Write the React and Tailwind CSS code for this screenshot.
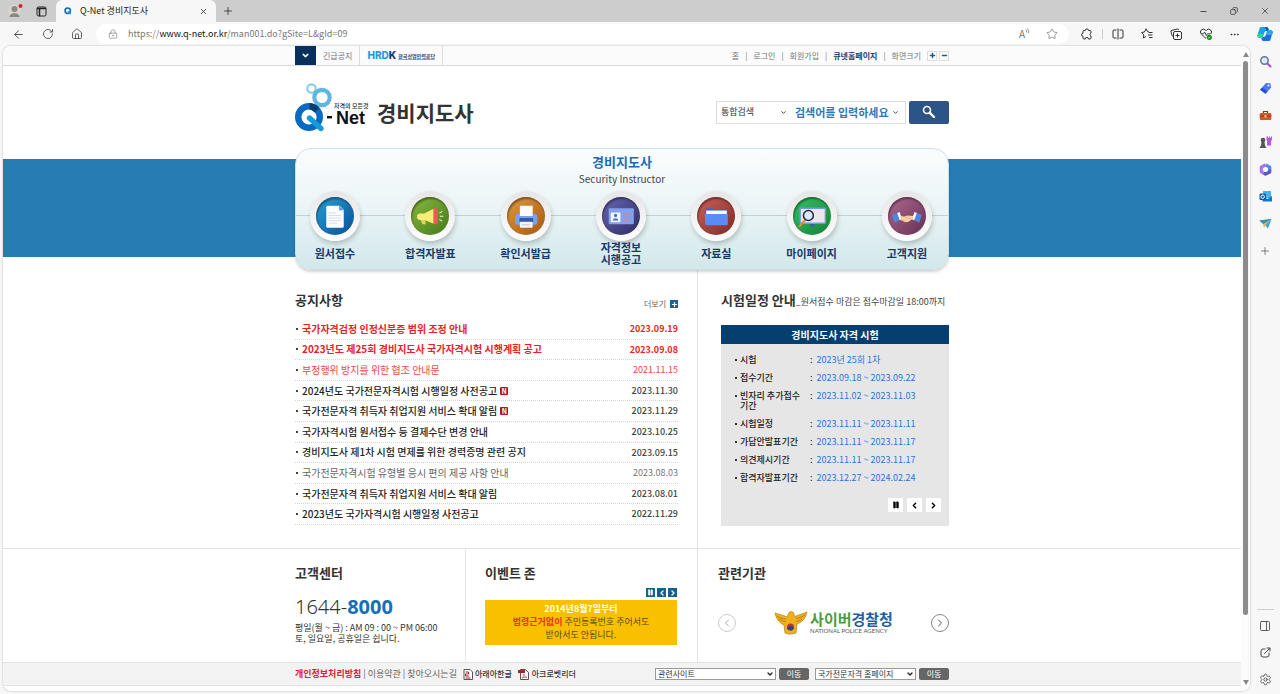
import {
  ArrowLeft,
  ChevronDown,
  ChevronLeft,
  ChevronRight,
  Copy,
  Ellipsis,
  House,
  LockKeyhole,
  Minus,
  PanelRight,
  Pause,
  Plus,
  RotateCw,
  Settings,
  Star,
  X,
} from 'lucide-react'

const NOTICES = [
  { title: '국가자격검정 인정신분증 범위 조정 안내', date: '2023.09.19', tone: 'hot' },
  { title: '2023년도 제25회 경비지도사 국가자격시험 시행계획 공고', date: '2023.09.08', tone: 'hot' },
  { title: '부정행위 방지를 위한 협조 안내문', date: '2021.11.15', tone: 'hotLight' },
  { title: '2024년도 국가전문자격시험 시행일정 사전공고', date: '2023.11.30', tone: 'bold', isNew: true },
  { title: '국가전문자격 취득자 취업지원 서비스 확대 알림', date: '2023.11.29', tone: 'bold', isNew: true },
  { title: '국가자격시험 원서접수 등 결제수단 변경 안내', date: '2023.10.25', tone: 'bold' },
  { title: '경비지도사 제1차 시험 면제를 위한 경력증명 관련 공지', date: '2023.09.15', tone: 'bold' },
  { title: '국가전문자격시험 유형별 응시 편의 제공 사항 안내', date: '2023.08.03', tone: 'light' },
  { title: '국가전문자격 취득자 취업지원 서비스 확대 알림', date: '2023.08.01', tone: 'bold' },
  { title: '2023년도 국가자격시험 시행일정 사전공고', date: '2022.11.29', tone: 'bold' },
]

const NOTICE_TONES = {
  hot: 'font-bold text-[#ee1c25]',
  hotLight: 'text-[#f0474c]',
  bold: 'font-medium text-[#222]',
  light: 'text-[#666]',
}

const DATE_TONES = {
  hot: 'font-bold text-[#ee1c25]',
  hotLight: 'text-[#f0474c]',
  bold: 'font-medium text-[#444]',
  light: 'text-[#777]',
}

const SCHEDULE = [
  ['시험', '2023년 25회 1차'],
  ['접수기간', '2023.09.18 ~ 2023.09.22'],
  ['빈자리 추가접수기간', '2023.11.02 ~ 2023.11.03'],
  ['시험일정', '2023.11.11 ~ 2023.11.11'],
  ['가답안발표기간', '2023.11.11 ~ 2023.11.17'],
  ['의견제시기간', '2023.11.11 ~ 2023.11.17'],
  ['합격자발표기간', '2023.12.27 ~ 2024.02.24'],
]

const MENUS = [
  {
    label: '원서접수',
    disc: 'from-[#2ba3d8] to-[#0b4d97]',
    icon: (
      <>
        <path d="M10 10a1.500 1.500 0 0 1 1.500-1.500H23l4 4V28.500a1.500 1.500 0 0 1-1.500 1.500h-14A1.500 1.500 0 0 1 10 28.500z" fill="#fafcfe" />
        <path d="M22.500 8.500l4.500 4.500h-4.500z" fill="#5f8fe8" />
        <path d="M12.500 15.500h7M12.500 18h12M12.500 20.500h12M12.500 23h12M12.500 25.500h8" stroke="#d3d6da" strokeWidth=".8" />
      </>
    ),
  },
  {
    label: '합격자발표',
    disc: 'from-[#8ab93f] to-[#447a1b]',
    icon: (
      <>
        <path d="M9 21.500h4.500l1 5h-3.500z" fill="#e5d250" />
        <path d="M6 17.500l2-1.500h5l9-4.500v14.500l-9-3.500H8l-2-1.500z" fill="#f6ec77" />
        <rect x="22" y="11" width="4" height="15.500" rx=".8" fill="#ee5a5a" />
        <path d="M28 15.500l2-1.300M28.500 18.700h2.500M28 22l2 1.300" stroke="#fff6c8" strokeWidth="1" strokeLinecap="round" />
      </>
    ),
  },
  {
    label: '확인서발급',
    disc: 'from-[#e09a3c] to-[#a8590f]',
    icon: (
      <>
        <rect x="8" y="16.500" width="21.500" height="10.500" rx="2" fill="#79a1ee" />
        <rect x="12.500" y="8.500" width="12.500" height="10" fill="#fbfbfb" />
        <rect x="12" y="20.500" width="13.500" height="4" rx="1" fill="#3459a8" />
        <rect x="12.500" y="24" width="12.500" height="6" rx="1" fill="#f2f4f8" />
        <path d="M14.500 27h8" stroke="#b9c3d6" strokeWidth=".8" />
      </>
    ),
  },
  {
    label: '자격정보 시행공고',
    disc: 'from-[#6a66b4] to-[#2f2f62]',
    icon: (
      <>
        <rect x="6.500" y="11" width="24.500" height="15.500" rx="1" fill="#82a0ec" />
        <rect x="8.500" y="15" width="9.500" height="9.500" rx=".6" fill="#eef3fd" />
        <circle cx="13.200" cy="18" r="1.600" fill="#4a73c8" />
        <path d="M10.500 23c0-3 5.400-3 5.400 0z" fill="#4a73c8" />
        <path d="M20.500 17h3.500m1.500 0h3M20.500 19.800h7M20.500 22.500h5" stroke="#c489a6" strokeWidth="1.200" />
      </>
    ),
  },
  {
    label: '자료실',
    disc: 'from-[#cb625a] to-[#7f2a26]',
    icon: (
      <>
        <path d="M8.500 12.500a1.500 1.500 0 0 1 1.500-1.500h5l1.500 1.500h12a1.500 1.500 0 0 1 1.500 1.500V18H8.500z" fill="#3b66cf" />
        <rect x="9" y="13.200" width="20" height="5" fill="#fdfdfd" />
        <path d="M7.500 16.500h22.500v9.500a1.500 1.500 0 0 1-1.500 1.500H9.500a1.500 1.500 0 0 1-1.500-1.500z" fill="#5b8cf5" />
      </>
    ),
  },
  {
    label: '마이페이지',
    disc: 'from-[#35c463] to-[#15803a]',
    icon: (
      <>
        <rect x="7" y="11" width="24.500" height="14.500" rx=".8" fill="#ece6ea" stroke="#6f9ce8" strokeWidth="1.400" />
        <path d="M16 26.200h6l-3 4z" fill="#35659f" />
        <path d="M11.500 22.500l-5 6" stroke="#e08b35" strokeWidth="2.200" strokeLinecap="round" />
        <circle cx="15" cy="18" r="4.800" fill="#dcebfa" stroke="#1d2f4d" strokeWidth="1.500" />
      </>
    ),
  },
  {
    label: '고객지원',
    disc: 'from-[#b16a95] to-[#66304f]',
    icon: (
      <>
        <path d="M4 17.500l6-2.500 2.500 7-6 3z" fill="#4c86dd" />
        <path d="M33 17.500l-6-2.500-2.500 7 6 3z" fill="#4c86dd" />
        <path d="M9 15.500l2.200-.8 2.500 7-2.200 1z" fill="#fff" />
        <path d="M28 15.500l-2.200-.8-2.500 7 2.200 1z" fill="#fff" />
        <path d="M12 18.500l4 .5 3-1 5.500.5-.8 3-3.700 2.700-3.500.3-4-2z" fill="#f6cfa5" />
        <path d="M17 20l3 .3 3.500 2M17 24l-3.500-2" stroke="#dba577" strokeWidth=".7" fill="none" />
      </>
    ),
  },
]

function QMark({ className }) {
  return (
    <svg viewBox="0 0 30 30" className={className} aria-hidden="true">
      <circle cx="14" cy="14" r="10" fill="none" stroke="#0b6cc0" strokeWidth="6" />
      <path d="M15 16l10 10" stroke="#1c9ad6" strokeWidth="5" />
    </svg>
  )
}

function QnetLogo() {
  return (
    <svg width="76" height="60" viewBox="0 0 76 60" role="img" aria-label="Q-Net">
      <circle cx="16.500" cy="6.500" r="4.200" fill="none" stroke="#8ccdea" strokeWidth="2.200" />
      <circle cx="27" cy="15.500" r="7.700" fill="none" stroke="#5fb7df" strokeWidth="4.200" />
      <circle cx="14" cy="35" r="10.800" fill="none" stroke="#0a6abf" strokeWidth="6.400" />
      <path d="M14.500 21a14 14 0 0 1 10 5.200l-5 4.200a7.600 7.600 0 0 0-5-3z" fill="#0a3d70" />
      <path d="M14.500 36l11.500 10.500" stroke="#189ad8" strokeWidth="5.400" strokeLinecap="round" />
      <rect x="32" y="34" width="5" height="2.400" fill="#111" />
      <text x="41" y="42" fontSize="18" fontWeight="700" fill="#111" fontFamily="Liberation Sans, sans-serif">Net</text>
      <text x="39" y="26" fontSize="6" fontWeight="500" fill="#222" fontFamily="Noto Sans CJK KR, sans-serif">자격의 모든것</text>
    </svg>
  )
}

function PoliceEmblem() {
  return (
    <svg width="34" height="24" viewBox="0 0 34 24" aria-hidden="true">
      <path d="M1 2c3 1 8 2 12 4l2-4.500 2.500-1 2 1 1 4C24 4 29 3 33 1c-1 5-4 10-10 12l-1 9-4.500 1h-3L11 22l-1-8C5 12 2 7 1 2z" fill="#eeb01c" stroke="#b87d10" strokeWidth=".7" />
      <path d="M3 5c3 2 6 3 9 3M5 8c3 2 5 2.500 7 2.500M31 4c-3 2-6 3-9 3.500M28 8c-2 1.500-4 2-6 2.500" stroke="#a66d0c" strokeWidth=".7" fill="none" />
      <circle cx="16.500" cy="16" r="3.400" fill="#c93232" />
      <path d="M13.100 16a3.400 3.400 0 0 0 6.800 0c-1.700-1.400-5-.2-6.800 0z" fill="#23468f" />
    </svg>
  )
}

function CopilotIcon() {
  return (
    <svg width="16" height="16" viewBox="0 0 16 16" aria-hidden="true">
      <path d="M4.500 1h5c1.200 0 1.700.8 2 2l.5 2H9.500C8 5 7.500 6 7 7.500L5.500 12H2.500C.8 12 0 10.500.5 9L2.500 2.500C2.800 1.500 3.500 1 4.500 1z" fill="#1aa3e0" />
      <path d="M9.500 1c1.200 0 1.700.8 2 2l.5 2H9.500L8 1z" fill="#1257b8" />
      <path d="M11.500 15h-5c-1.200 0-1.700-.8-2-2L4 11h2.500C8 11 8.500 10 9 8.500L10.500 4h3c1.700 0 2.500 1.500 2 3l-2 6.500c-.3 1-1 1.500-2 1.500z" fill="#1d6fe0" />
      <path d="M11 4h2.500c1.700 0 2.500 1.500 2 3L15 9H9z" fill="#2aa9e8" />
      <path d="M1 8h5.800L5.500 12h-3C.8 12 0 10.500.5 9z" fill="#34d0a5" />
    </svg>
  )
}

const SIDE_ICONS = [
  {
    name: '검색',
    art: (
      <>
        <path d="M8.500 8.500l3 3" stroke="#a94fe0" strokeWidth="2" strokeLinecap="round" />
        <circle cx="5.500" cy="5.500" r="3.700" fill="#dbeaf5" stroke="#66798a" strokeWidth="1.500" />
      </>
    ),
  },
  {
    name: '쇼핑',
    art: (
      <>
        <path d="M7 1l4.500.3.500 4.500-5.500 6-5.500-4z" fill="#4a7bf0" />
        <path d="M1 7.800l5.500 4 2-2.200-5-4z" fill="#2f4fd0" />
        <circle cx="9.500" cy="3.500" r="1" fill="#fff" />
      </>
    ),
  },
  {
    name: '도구',
    art: (
      <>
        <path d="M4.500 4V2.500h4V4" fill="none" stroke="#8d3216" strokeWidth="1.200" />
        <rect x=".8" y="4" width="11.500" height="7" rx="1" fill="#d4572a" />
        <path d="M.8 7h11.500" stroke="#8d3216" strokeWidth="1" />
        <rect x="5.500" y="6" width="2" height="2.500" fill="#f5d08a" />
      </>
    ),
  },
  {
    name: '게임',
    art: (
      <>
        <path d="M7.500.5H9v1.200h1V.5h1v1.200h1V.5h1v3.500l-1 1v4.500H8V5L7.500 4z" fill="#b956ea" />
        <circle cx="4" cy="4" r="2.300" fill="#555" />
        <path d="M2.500 5.500h3l.5 4L7.500 12h-7L2 9.500z" fill="#555" />
      </>
    ),
  },
  {
    name: 'Microsoft 365',
    art: (
      <>
        <path d="M6.500 1.800L10.700 4.200v3" fill="none" stroke="#4b8ef2" strokeWidth="3.200" strokeLinejoin="round" />
        <path d="M10.700 6.500v2.500L6.500 11.200 4.500 10" fill="none" stroke="#5b55c8" strokeWidth="3.200" strokeLinejoin="round" />
        <path d="M4.500 10L2.300 8.800V4.200l4.200-2.400" fill="none" stroke="#a474e8" strokeWidth="3.200" strokeLinejoin="round" />
      </>
    ),
  },
  {
    name: 'Outlook',
    art: (
      <>
        <rect x="4" y="1" width="8" height="7" fill="#42b4ee" />
        <path d="M3.500 6l5 3L13 6v5.500H3.500z" fill="#1674c9" />
        <rect x=".5" y="3.500" width="6.500" height="6.500" rx="1" fill="#0f5ead" />
        <circle cx="3.700" cy="6.700" r="1.700" fill="none" stroke="#fff" strokeWidth="1" />
      </>
    ),
  },
  {
    name: '보내기',
    art: (
      <>
        <path d="M.5 3.500L12.500 2 9 11.500 6 8z" fill="#37a7e2" />
        <path d="M12.500 2L4 7l1 4 1.500-3z" fill="#e8b84e" />
        <path d="M.5 3.500L12.500 2 4 7z" fill="#3c8fb6" />
      </>
    ),
  },
]

function BrowserTabs() {
  return (
    <div className="flex h-[22px] items-center bg-[#cdcdcd] text-[#222]">
      <div className="flex w-14 items-center gap-3 pl-2">
        <svg width="16" height="16" viewBox="0 0 16 16" aria-hidden="true">
          <circle cx="6.500" cy="8" r="6.500" fill="#d8d3cd" />
          <circle cx="6.500" cy="6" r="3" fill="#8c8781" />
          <path d="M1.500 14c0-5 10-5 10 0z" fill="#8c8781" />
          <circle cx="12.500" cy="3" r="2" fill="#d81f26" />
        </svg>
        <svg width="11" height="11" viewBox="0 0 11 11" fill="none" stroke="#222" aria-hidden="true">
          <rect x="1" y="1" width="9" height="9" rx="1.500" />
          <path d="M1 2.500h9M3.500 3v7" strokeWidth="1.500" />
        </svg>
      </div>
      <div className="flex h-full w-40 items-center gap-2 rounded-t-md bg-[#f7f7f7] px-2">
        <QMark className="size-2" />
        <span className="flex-1 text-[9px]">Q-Net 경비지도사</span>
        <button type="button" aria-label="탭 닫기"><X size={9} /></button>
      </div>
      <button type="button" aria-label="새 탭" className="ml-1 p-0.5"><Plus size={12} strokeWidth={1.500} /></button>
      <div className="ml-auto flex w-[81px] items-center justify-between pr-2.5">
        <button type="button" aria-label="최소화"><Minus size={9} /></button>
        <button type="button" aria-label="이전 크기로"><Copy size={8} className="-scale-x-100" /></button>
        <button type="button" aria-label="닫기"><X size={10} strokeWidth={1.500} /></button>
      </div>
    </div>
  )
}

function BrowserToolbar() {
  return (
    <div className="flex h-6 items-center bg-[#f7f7f7] text-[#333]">
      <div className="flex w-24 items-center gap-[17px] pl-3">
        <button type="button" aria-label="뒤로"><ArrowLeft size={13} strokeWidth={1.500} /></button>
        <button type="button" aria-label="새로 고침"><RotateCw size={12} strokeWidth={1.500} /></button>
        <button type="button" aria-label="홈"><House size={12} strokeWidth={1.500} /></button>
      </div>
      <div className="flex h-5 flex-1 items-center rounded-full bg-white pl-3 pr-[11px] text-[#777]">
        <LockKeyhole size={10} strokeWidth={1.500} />
        <p className="flex-1 pl-2.5 text-[9px]">
          https://<span className="text-[#111]">www.q-net.or.kr</span>/man001.do?gSite=L&amp;gId=09
        </p>
        <button type="button" aria-label="소리내어 읽기" className="mr-4 flex items-start text-[10px] leading-3">
          A
          <svg width="5" height="6" viewBox="0 0 5 6" fill="none" stroke="currentColor" strokeWidth=".8" aria-hidden="true">
            <path d="M.8 1.500q1.200 1.300.6 3M2.500.5q2 2 1 4.800" />
          </svg>
        </button>
        <button type="button" aria-label="즐겨찾기 추가"><Star size={12} strokeWidth={1.500} /></button>
      </div>
      <div className="flex w-[211px] items-center justify-between pl-3 pr-[7px]">
        <div className="flex items-center gap-[9px]">
          <button type="button" aria-label="확장">
            <svg width="12" height="12" viewBox="0 0 12 12" fill="none" stroke="currentColor" strokeLinejoin="round" aria-hidden="true">
              <path d="M2 3.500Q2 2.500 3 2.500H4.300a1.600 1.600 0 0 1 3.200 0H9q1 0 1 1V5a1.600 1.600 0 0 0 0 3v2q0 1-1 1H7.500a1.600 1.600 0 0 0-3.200 0H3q-1 0-1-1V8.300a1.500 1.500 0 0 1 0-3z" />
            </svg>
          </button>
          <span className="h-2.5 w-px bg-[#ccc]" />
          <button type="button" aria-label="화면 분할">
            <svg width="12" height="12" viewBox="0 0 12 12" fill="none" stroke="currentColor" aria-hidden="true">
              <path d="M4.500 2H2a1 1 0 0 0-1 1v6a1 1 0 0 0 1 1h2.500M7.500 2H10a1 1 0 0 1 1 1v6a1 1 0 0 1-1 1H7.500M6 .5v11" />
            </svg>
          </button>
        </div>
        <button type="button" aria-label="즐겨찾기">
          <svg width="12" height="12" viewBox="0 0 12 12" fill="none" stroke="currentColor" strokeLinejoin="round" aria-hidden="true">
            <path d="M8 4L6.800 3.800 5 .8 3.500 4 .6 4.500l2.200 2.200L2.300 10 5 8.500M8 4.500h3.500M7 7h4.500M8 9.500h3.500" />
          </svg>
        </button>
        <button type="button" aria-label="컬렉션">
          <svg width="12" height="12" viewBox="0 0 12 12" fill="none" stroke="currentColor" aria-hidden="true">
            <path d="M2.500 8.500L1 4a1.300 1.300 0 0 1 1-1.700L7.500 1A1.500 1.500 0 0 1 9 2" />
            <rect x="3.500" y="3.500" width="8" height="8" rx="1.500" />
            <path d="M7.500 5.500v4M5.500 7.500h4" />
          </svg>
        </button>
        <button type="button" aria-label="성능">
          <svg width="12" height="12" viewBox="0 0 12 12" fill="none" stroke="currentColor" strokeLinejoin="round" aria-hidden="true">
            <path d="M6 10.500L1.300 6A2.800 2.800 0 0 1 5.300 2L6 2.700 6.700 2a2.800 2.800 0 0 1 4 4" />
            <path d="M1.500 5.800h2L4.700 4l1.600 3.500 1.200-1.700h3" strokeWidth=".9" />
            <circle cx="9.300" cy="9.300" r="2.600" fill="#138a13" stroke="none" />
            <path d="M8.100 9.300l.9.900 1.500-1.600" stroke="#fff" strokeWidth=".7" />
          </svg>
        </button>
        <button type="button" aria-label="설정 및 기타"><Ellipsis size={11} /></button>
        <button type="button" aria-label="Copilot"><CopilotIcon /></button>
      </div>
    </div>
  )
}

function Sidebar() {
  return (
    <aside className="flex w-[30px] flex-col items-center text-[#444]">
      <div className="flex flex-col items-center pt-0.5">
        {SIDE_ICONS.map(({ name, art }) => (
          <button key={name} type="button" aria-label={name} className="grid h-[27px] place-items-center">
            <svg width="13" height="13" viewBox="0 0 13 13">{art}</svg>
          </button>
        ))}
        <button type="button" aria-label="사용자 지정" className="grid h-[27px] place-items-center">
          <Plus size={12} strokeWidth={1.300} />
        </button>
      </div>
      <div className="mt-auto flex flex-col items-center gap-[15px] border-t border-[#ccc] px-0.5 pb-2 pt-2.5">
        <button type="button" aria-label="사이드바"><PanelRight size={12} strokeWidth={1.700} /></button>
        <button type="button" aria-label="새 창">
          <svg width="11" height="11" viewBox="0 0 11 11" fill="none" stroke="currentColor" strokeLinecap="round" strokeLinejoin="round" aria-hidden="true">
            <path d="M5 2H3a2 2 0 0 0-2 2v4a2 2 0 0 0 2 2h4a2 2 0 0 0 2-2V6M4.500 6.500l5.300-5.300M7 1h3v3" />
          </svg>
        </button>
        <button type="button" aria-label="설정"><Settings size={13} strokeWidth={1.500} /></button>
      </div>
    </aside>
  )
}

function Scrollbar() {
  return (
    <div className="flex w-[9px] flex-col items-center bg-[#fbfbfb] py-1.5" aria-hidden="true">
      <svg width="6" height="5" viewBox="0 0 6 5"><path d="M3 0l3 5H0z" fill="#888" /></svg>
      <div className="my-1 w-[5px] grow-[9] rounded-full bg-[#8b8b8b]" />
      <div className="grow" />
      <svg width="6" height="5" viewBox="0 0 6 5"><path d="M3 5l3-5H0z" fill="#888" /></svg>
    </div>
  )
}

function UtilityBar() {
  return (
    <div className="border-b border-[#d9d9d9] bg-[#fbfbfb]">
      <div className="mx-auto flex h-[19px] w-[654px] items-center text-[8px] text-[#777]">
        <button type="button" aria-label="긴급공지 열기" className="grid h-full w-[21px] place-items-center bg-[#07305c] text-white">
          <ChevronDown size={9} strokeWidth={4} />
        </button>
        <a href="#notice" className="px-[7px]">긴급공지</a>
        <a href="#hrdk" className="flex h-full items-center gap-0.5 border-x border-[#ddd] px-[7px]">
          <span className="font-[Inter] text-[10px] font-extrabold">
            <span className="text-[#1c9be0]">HRD</span><span className="text-[#12337e]">K</span>
          </span>
          <span className="border-b border-[#8fa6c8] text-[5px] font-bold leading-[7px] text-[#1b3f80]">한국산업인력공단</span>
        </a>
        <nav className="ml-auto flex items-center gap-1.5">
          <a href="#home">홈</a>
          <span>|</span>
          <a href="#login">로그인</a>
          <span>|</span>
          <a href="#join">회원가입</a>
          <span>|</span>
          <a href="#qnet" className="font-bold text-[#1f416d]">큐넷홈페이지</a>
          <span>|</span>
          <span>화면크기</span>
          <span className="flex gap-0.5 text-[#14608f]">
            <button type="button" aria-label="확대" className="grid size-[10px] place-items-center border border-[#ddd]"><Plus size={7} strokeWidth={5} /></button>
            <button type="button" aria-label="축소" className="grid size-[10px] place-items-center border border-[#ddd]"><Minus size={7} strokeWidth={5} /></button>
          </span>
        </nav>
      </div>
    </div>
  )
}

function Header() {
  return (
    <header className="mx-auto flex w-[654px] items-center pb-1.5 pt-4">
      <a href="#home"><QnetLogo /></a>
      <h1 className="pl-1.5 text-[21px] font-bold leading-6 text-[#333]">경비지도사</h1>
      <form className="ml-auto flex h-[23px] gap-[3px]">
        <div className="flex w-[190px] items-center border border-[#ddd] pr-1.5">
          <div className="grid w-[70px] items-center">
            <select aria-label="검색 구분" className="col-start-1 row-start-1 w-full appearance-none bg-transparent pl-1 text-[9px] text-[#333]">
              <option>통합검색</option>
            </select>
            <ChevronDown size={7} strokeWidth={3} className="pointer-events-none col-start-1 row-start-1 justify-self-end text-[#333]" />
          </div>
          <input
            aria-label="검색어"
            placeholder="검색어를 입력하세요"
            className="ml-2 min-w-0 flex-1 text-[11px] font-bold outline-none placeholder:text-[#2e78ba]"
          />
          <ChevronDown size={7} strokeWidth={3} className="text-[#333]" />
        </div>
        <button type="submit" aria-label="검색" className="grid w-10 place-items-center rounded-xs bg-[#2c5585]">
          <svg width="14" height="14" viewBox="0 0 14 14" fill="none" stroke="#fff" aria-hidden="true">
            <circle cx="5" cy="5" r="3.500" strokeWidth="1.600" />
            <path d="M7.800 7.800l4.200 4.200" strokeWidth="2.400" strokeLinecap="round" />
          </svg>
        </button>
      </form>
    </header>
  )
}

function QuickMenu() {
  return (
    <section className="grid">
      <div className="col-start-1 row-start-1 mb-[13px] mt-[11px] bg-[#267cb3]" />
      <div className="z-10 col-start-1 row-start-1 mx-auto w-[654px] rounded-2xl border border-[#cfe0e8] bg-linear-to-b from-[#fafdfe] via-[#eaf4f6] to-[#d2e8ea] pb-1 pt-1 text-center shadow-[0_2px_3px_rgba(0,0,0,0.18)]">
        <h2 className="text-[13px] font-bold leading-[18px] text-[#176cb8]">경비지도사</h2>
        <p className="text-[10px] leading-4 text-[#444]">Security Instructor</p>
        <div className="mt-1 grid">
          <div className="col-start-1 row-start-1 mt-[24px] h-px bg-[#c5d0d4]" />
          <ul className="col-start-1 row-start-1 -mx-px flex justify-between pr-0.5">
            {MENUS.map(({ label, disc, icon }) => (
              <li key={label} className="w-20">
                <a href="#menu" className="flex flex-col items-center">
                  <span className="grid size-[50px] place-items-center rounded-full bg-linear-to-b from-[#e6e6e6] to-[#fdfdfd] shadow-[1px_3px_5px_rgba(0,0,0,0.2)]">
                    <span className={`size-[38px] overflow-hidden rounded-full bg-linear-to-br shadow-[inset_1px_2px_2px_rgba(0,0,0,0.4)] ${disc}`}>
                      <svg width="38" height="38" viewBox="0 0 37 37" aria-hidden="true">{icon}</svg>
                    </span>
                  </span>
                  <span className="flex h-6 w-14 items-center justify-center break-keep text-[11px] font-bold leading-3 text-[#17396c]">
                    <span className={label.includes(' ') ? 'w-11' : 'whitespace-nowrap'}>{label}</span>
                  </span>
                </a>
              </li>
            ))}
          </ul>
        </div>
      </div>
    </section>
  )
}

function Notices() {
  return (
    <section className="w-[403px] border-r border-[#e3e3e3] pr-[19px] pt-5">
      <div className="flex items-end justify-between">
        <h2 className="text-[13px] font-bold leading-5 text-[#333]">공지사항</h2>
        <a href="#more" className="flex items-center gap-1 pb-px text-[8px] leading-2.5 text-[#666]">
          더보기
          <span className="grid size-2 place-items-center bg-[#1d5f8f] text-white"><Plus size={7} strokeWidth={4} /></span>
        </a>
      </div>
      <ul className="mt-[9px] grid h-[206px] auto-rows-fr">
        {NOTICES.map(({ title, date, tone, isNew }) => (
          <li key={date} className="flex items-center justify-between border-b border-dotted border-[#d4d4d4]">
            <a href="#notice" className="flex items-center pl-px text-[10px] leading-4">
              <span className="mr-1 size-0.5 bg-[#444]" />
              <span className={NOTICE_TONES[tone]}>{title}</span>
              {isNew && (
                <span className="ml-[3px] grid size-2 place-items-center rounded-[1px] bg-[#b5121b] text-[7px] font-bold leading-2 text-white">N</span>
              )}
            </a>
            <time className={`text-[9px] ${DATE_TONES[tone]}`}>{date}</time>
          </li>
        ))}
      </ul>
    </section>
  )
}

function Schedule() {
  const control = 'grid h-3.5 w-[15px] place-items-center bg-white text-black'

  return (
    <section className="flex-1 pb-[22px] pl-[23px] pt-5">
      <h2 className="whitespace-nowrap text-[13px] font-bold leading-5 text-[#333]">
        시험일정 안내<span className="text-[9px] font-normal text-[#444]">_원서접수 마감은 접수마감일 18:00까지</span>
      </h2>
      <div className="mt-[13px] bg-[#e6e6e6]">
        <h3 className="bg-[#053f70] text-center text-[10px] font-bold leading-[19px] text-white">경비지도사 자격 시험</h3>
        <dl className="flex flex-col gap-2 pl-[14px] pt-[11px] text-[9px] leading-2.5">
          {SCHEDULE.map(([term, value]) => (
            <div key={term} className="flex">
              <dt className="flex w-[75px] gap-[3px] text-[#222]">
                <span className="mt-1 size-0.5 shrink-0 bg-[#333]" />
                <span className="w-[65px] font-medium">{term}</span>
              </dt>
              <dd className="flex gap-1 text-[#2b74e2]"><span className="text-[#222]">:</span>{value}</dd>
            </div>
          ))}
        </dl>
        <div className="flex justify-end gap-1 pb-[14px] pr-2 pt-[15px]">
          <button type="button" aria-label="일시정지" className={control}><Pause size={8} fill="currentColor" /></button>
          <button type="button" aria-label="이전" className={control}><ChevronLeft size={9} strokeWidth={4} /></button>
          <button type="button" aria-label="다음" className={control}><ChevronRight size={9} strokeWidth={4} /></button>
        </div>
      </div>
    </section>
  )
}

function BottomPanels() {
  const eventControl = 'grid size-[9px] place-items-center bg-[#0f6290] text-white'
  const arrow = 'grid size-[18px] place-items-center rounded-full border'

  return (
    <div className="border-t border-[#e3e3e3]">
      <div className="mx-auto flex h-[113px] w-[654px] text-[#333]">
        <section className="w-[171px] border-r border-[#e8e8e8] pt-[14px]">
          <h2 className="text-[13px] font-bold leading-5">고객센터</h2>
          <p className="mt-2.5 pb-px font-['Noto_Sans'] text-[20px] font-light leading-7">
            1644-<b className="font-bold text-[#176fb6]">8000</b>
          </p>
          <p className="text-[9px] leading-[11px]">
            평일(월 ~ 금) : AM 09 : 00 ~ PM 06:00
            <br />
            토, 일요일, 공휴일은 쉽니다.
          </p>
        </section>
        <section className="w-[232px] border-r border-[#e3e3e3] pl-[19px] pr-5 pt-[14px]">
          <h2 className="text-[13px] font-bold leading-5">이벤트 존</h2>
          <div className="mt-[5px] flex justify-end gap-0.5">
            <button type="button" aria-label="일시정지" className={eventControl}><Pause size={7} fill="currentColor" /></button>
            <button type="button" aria-label="이전" className={eventControl}><ChevronLeft size={8} strokeWidth={4} /></button>
            <button type="button" aria-label="다음" className={eventControl}><ChevronRight size={8} strokeWidth={4} /></button>
          </div>
          <a href="#event" className="mt-[3px] block bg-[#f9c000] pb-1 pt-0.5 text-center text-[9px] leading-[13px] text-[#5c4a12]">
            <span className="block font-bold text-white">2014년8월7일부터</span>
            <span className="block"><b className="text-[#e8341c]">법령근거없이</b> 주민등록번호 주어서도</span>
            <span className="block">받아서도 안됩니다.</span>
          </a>
        </section>
        <section className="flex-1 pl-5 pt-[14px]">
          <h2 className="text-[13px] font-bold leading-5">관련기관</h2>
          <div className="mt-7 flex items-center justify-between">
            <button type="button" aria-label="이전 기관" className={`${arrow} border-[#ccc] text-[#aaa]`}><ChevronLeft size={12} /></button>
            <a href="#police" className="flex items-center gap-0.5">
              <PoliceEmblem />
              <span className="flex flex-col">
                <span className="text-[15px] font-bold leading-4 text-[#4a9e3f]">사이버<span className="text-[#22609f]">경찰청</span></span>
                <span className="whitespace-nowrap font-[Lato] text-[6px] leading-2 text-[#555]">NATIONAL POLICE AGENCY</span>
              </span>
            </a>
            <button type="button" aria-label="다음 기관" className={`${arrow} border-[#888] text-[#555]`}><ChevronRight size={12} /></button>
          </div>
        </section>
      </div>
    </div>
  )
}

function FooterSelect({ label, option, width }) {
  return (
    <span className={`grid items-center ${width}`}>
      <select aria-label={label} className="col-start-1 row-start-1 h-3 w-full appearance-none border border-[#999] bg-white pl-0.5 text-[8px] leading-2.5 text-[#333]">
        <option>{option}</option>
      </select>
      <ChevronDown size={8} strokeWidth={4} className="pointer-events-none col-start-1 row-start-1 mr-0.5 justify-self-end text-[#222]" />
    </span>
  )
}

function Footer() {
  const go = 'h-3 w-[30px] rounded-xs bg-[#666] text-[8px] leading-3 text-white'

  return (
    <footer className="border-y border-[#e3e3e3] bg-[#f3f3f3]">
      <div className="mx-auto flex h-[22px] w-[654px] items-center whitespace-nowrap text-[9px] text-[#666]">
        <a href="#privacy" className="font-bold text-[#e0202a]">개인정보처리방침</a>
        <span className="px-0.5">|</span>
        <a href="#terms">이용약관</a>
        <span className="px-0.5">|</span>
        <a href="#map">찾아오시는길</a>
        <a href="#hwp" className="ml-1.5 flex items-center gap-0.5 text-[8px] font-medium text-[#333]">
          <svg width="10" height="11" viewBox="0 0 10 11" aria-hidden="true">
            <path d="M1 .5h6l2.500 2.500v7.500H1z" fill="#fff" stroke="#555" />
            <path d="M2.500 3h3v2h-3v2h3.500M2.500 9h5" stroke="#a82035" fill="none" />
          </svg>
          아래아한글
        </a>
        <a href="#pdf" className="ml-1.5 flex items-center gap-[3px] text-[8px] font-medium text-[#333]">
          <svg width="11" height="11" viewBox="0 0 11 11" aria-hidden="true">
            <path d="M2.500.5h5l3 3v7h-8z" fill="#fff" stroke="#555" />
            <rect x="0" y="1" width="7" height="3" fill="#a3262a" />
            <path d="M4 9c2-2 2-4 2-4s0 3 3 3.500C7 8 5 8.500 4 9z" stroke="#c43b3b" strokeWidth=".7" fill="none" />
          </svg>
          아크로벳리더
        </a>
        <form className="ml-auto flex gap-[3px]">
          <FooterSelect label="관련사이트" option="관련사이트" width="w-[121px]" />
          <button type="button" className={go}>이동</button>
        </form>
        <form className="ml-1.5 flex gap-[3px]">
          <FooterSelect label="홈페이지" option="국가전문자격 홈페이지" width="w-[101px]" />
          <button type="button" className={go}>이동</button>
        </form>
      </div>
    </footer>
  )
}

export default function App() {
  return (
    <div className="flex min-h-screen flex-col bg-[#f7f7f7] font-['Noto_Sans_CJK_KR',sans-serif] leading-normal">
      <BrowserTabs />
      <BrowserToolbar />
      <div className="flex flex-1">
        <div className="mb-[3px] ml-[3px] flex flex-1 overflow-hidden rounded-lg bg-white shadow-[0_0_2px_rgba(0,0,0,0.3)]">
          <main className="min-w-0 flex-1">
            <UtilityBar />
            <Header />
            <QuickMenu />
            <div className="mx-auto flex w-[654px]">
              <Notices />
              <Schedule />
            </div>
            <BottomPanels />
            <Footer />
          </main>
          <Scrollbar />
        </div>
        <Sidebar />
      </div>
    </div>
  )
}
